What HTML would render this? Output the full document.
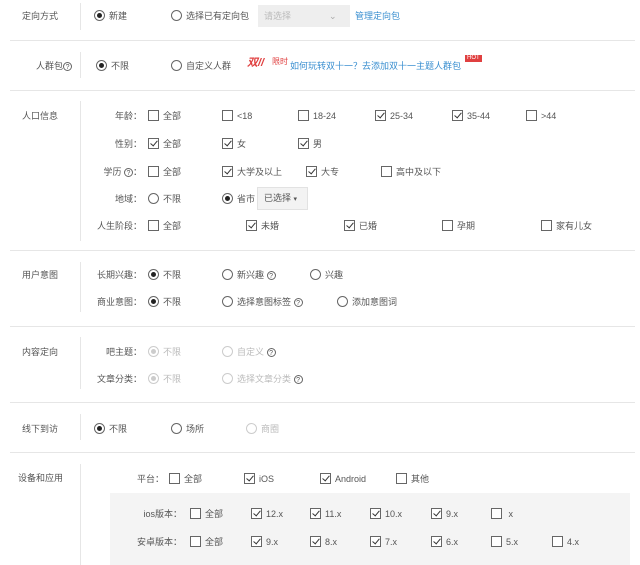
<!DOCTYPE html>
<html><head><meta charset="utf-8"><style>
body{margin:0;width:640px;height:565px;background:#fff;position:relative;overflow:hidden;font-family:"Liberation Sans","Noto Sans CJK SC",sans-serif;font-size:9px;color:#555}
.a{position:absolute;white-space:nowrap;line-height:12px}
.hl{position:absolute;left:10px;width:625px;height:1px;background:#e6e6e6}
.vl{position:absolute;left:80px;width:1px;background:#e6e6e6}
.cb,.rd{display:inline-block;border:1px solid #666;vertical-align:-2px;margin-right:4px;position:relative;box-sizing:border-box;background:#fff}
.cb{width:11px;height:11px}
.rd{border-radius:50%;width:11px;height:11px}
.rd.on:after{content:"";position:absolute;left:2px;top:2px;width:5px;height:5px;border-radius:50%;background:#222}
.cb.on:after{content:"";position:absolute;left:3px;top:0px;width:3px;height:6px;border:solid #333;border-width:0 1.2px 1.2px 0;transform:rotate(40deg)}
.dis{color:#bbb}.dis .rd{border-color:#ccc}.dis .rd.on:after{background:#ccc}
.r{text-align:right}
.q{display:inline-block;width:9px;height:9px;border:1px solid #666;border-radius:50%;font-size:7px;line-height:9px;text-align:center;vertical-align:0px;box-sizing:border-box}
</style></head><body>
<div class="vl" style="top:3px;height:27px"></div>
<div class="a" style="left:22px;top:10px">定向方式</div>
<div class="a" style="left:94px;top:10px"><span class="rd on"></span>新建</div>
<div class="a" style="left:171px;top:10px"><span class="rd"></span>选择已有定向包</div>
<div class="a" style="left:258px;top:5px;width:92px;height:22px;background:#eee"></div>
<div class="a" style="left:264px;top:10px;color:#bbb">请选择</div>
<div class="a" style="left:329px;top:10px;color:#aaa">⌄</div>
<div class="a" style="left:355px;top:10px;color:#3a8fd0">管理定向包</div>
<div class="hl" style="top:40px"></div>

<div class="vl" style="top:52px;height:26px"></div>
<div class="a" style="left:36px;top:60px">人群包<span class="q">?</span></div>
<div class="a" style="left:96px;top:60px"><span class="rd on"></span>不限</div>
<div class="a" style="left:171px;top:60px"><span class="rd"></span>自定义人群</div>
<div class="a" style="left:247px;top:57px;color:#e04040;font-weight:bold;font-style:italic;font-size:11px">双//</div>
<div class="a" style="left:272px;top:56px;color:#e04040;font-size:8px">限时</div>
<div class="a" style="left:290px;top:60px;color:#3a8fd0">如何玩转双十一？去添加双十一主题人群包</div>
<div class="a" style="left:465px;top:55px;background:#e04040;color:#fff;font-size:6px;line-height:7px;padding:0 2px">HOT</div>
<div class="hl" style="top:90px"></div>

<div class="vl" style="top:101px;height:140px"></div>
<div class="a" style="left:22px;top:110px">人口信息</div>
<div class="a r" style="left:80px;width:62px;top:110px">年龄：</div>
<div class="a" style="left:148px;top:110px"><span class="cb"></span>全部</div>
<div class="a" style="left:222px;top:110px"><span class="cb"></span>&lt;18</div>
<div class="a" style="left:298px;top:110px"><span class="cb"></span>18-24</div>
<div class="a" style="left:375px;top:110px"><span class="cb on"></span>25-34</div>
<div class="a" style="left:452px;top:110px"><span class="cb on"></span>35-44</div>
<div class="a" style="left:526px;top:110px"><span class="cb"></span>&gt;44</div>

<div class="a r" style="left:80px;width:62px;top:138px">性别：</div>
<div class="a" style="left:148px;top:138px"><span class="cb on"></span>全部</div>
<div class="a" style="left:222px;top:138px"><span class="cb on"></span>女</div>
<div class="a" style="left:298px;top:138px"><span class="cb on"></span>男</div>

<div class="a r" style="left:80px;width:62px;top:166px">学历 <span class="q">?</span>：</div>
<div class="a" style="left:148px;top:166px"><span class="cb"></span>全部</div>
<div class="a" style="left:222px;top:166px"><span class="cb on"></span>大学及以上</div>
<div class="a" style="left:306px;top:166px"><span class="cb on"></span>大专</div>
<div class="a" style="left:381px;top:166px"><span class="cb"></span>高中及以下</div>

<div class="a r" style="left:80px;width:62px;top:193px">地域：</div>
<div class="a" style="left:148px;top:193px"><span class="rd"></span>不限</div>
<div class="a" style="left:222px;top:193px"><span class="rd on"></span>省市</div>
<div class="a" style="left:257px;top:187px;width:51px;height:23px;background:#f3f3f3;border:1px solid #e2e2e2;box-sizing:border-box"></div>
<div class="a" style="left:264px;top:192px">已选择 <span style="font-size:7px">▾</span></div>

<div class="a r" style="left:80px;width:62px;top:220px">人生阶段：</div>
<div class="a" style="left:148px;top:220px"><span class="cb"></span>全部</div>
<div class="a" style="left:246px;top:220px"><span class="cb on"></span>未婚</div>
<div class="a" style="left:344px;top:220px"><span class="cb on"></span>已婚</div>
<div class="a" style="left:442px;top:220px"><span class="cb"></span>孕期</div>
<div class="a" style="left:541px;top:220px"><span class="cb"></span>家有儿女</div>
<div class="hl" style="top:250px"></div>

<div class="vl" style="top:262px;height:50px"></div>
<div class="a" style="left:22px;top:269px">用户意图</div>
<div class="a r" style="left:80px;width:62px;top:269px">长期兴趣：</div>
<div class="a" style="left:148px;top:269px"><span class="rd on"></span>不限</div>
<div class="a" style="left:222px;top:269px"><span class="rd"></span>新兴趣 <span class="q">?</span></div>
<div class="a" style="left:310px;top:269px"><span class="rd"></span>兴趣</div>
<div class="a r" style="left:80px;width:62px;top:296px">商业意图：</div>
<div class="a" style="left:148px;top:296px"><span class="rd on"></span>不限</div>
<div class="a" style="left:222px;top:296px"><span class="rd"></span>选择意图标签 <span class="q">?</span></div>
<div class="a" style="left:337px;top:296px"><span class="rd"></span>添加意图词</div>
<div class="hl" style="top:326px"></div>

<div class="vl" style="top:337px;height:52px"></div>
<div class="a" style="left:22px;top:346px">内容定向</div>
<div class="a r" style="left:80px;width:62px;top:346px">吧主题：</div>
<div class="a dis" style="left:148px;top:346px"><span class="rd on"></span>不限</div>
<div class="a dis" style="left:222px;top:346px"><span class="rd"></span>自定义 <span class="q" style="color:#555">?</span></div>
<div class="a r" style="left:80px;width:62px;top:373px">文章分类：</div>
<div class="a dis" style="left:148px;top:373px"><span class="rd on"></span>不限</div>
<div class="a dis" style="left:222px;top:373px"><span class="rd"></span>选择文章分类 <span class="q" style="color:#555">?</span></div>
<div class="hl" style="top:402px"></div>

<div class="vl" style="top:414px;height:26px"></div>
<div class="a" style="left:22px;top:423px">线下到访</div>
<div class="a" style="left:94px;top:423px"><span class="rd on"></span>不限</div>
<div class="a" style="left:171px;top:423px"><span class="rd"></span>场所</div>
<div class="a dis" style="left:246px;top:423px"><span class="rd"></span>商圈</div>
<div class="hl" style="top:452px"></div>

<div class="vl" style="top:464px;height:101px"></div>
<div class="a" style="left:18px;top:472px">设备和应用</div>
<div class="a r" style="left:100px;width:64px;top:473px">平台：</div>
<div class="a" style="left:169px;top:473px"><span class="cb"></span>全部</div>
<div class="a" style="left:244px;top:473px"><span class="cb on"></span>iOS</div>
<div class="a" style="left:320px;top:473px"><span class="cb on"></span>Android</div>
<div class="a" style="left:396px;top:473px"><span class="cb"></span>其他</div>
<div class="a" style="left:110px;top:493px;width:520px;height:72px;background:#f4f4f4"></div>
<div class="a r" style="left:110px;width:72px;top:508px">ios版本：</div>
<div class="a" style="left:190px;top:508px"><span class="cb"></span>全部</div>
<div class="a" style="left:251px;top:508px"><span class="cb on"></span>12.x</div>
<div class="a" style="left:310px;top:508px"><span class="cb on"></span>11.x</div>
<div class="a" style="left:370px;top:508px"><span class="cb on"></span>10.x</div>
<div class="a" style="left:431px;top:508px"><span class="cb on"></span>9.x</div>
<div class="a" style="left:491px;top:508px"><span class="cb"></span> x</div>
<div class="a r" style="left:110px;width:72px;top:536px">安卓版本：</div>
<div class="a" style="left:190px;top:536px"><span class="cb"></span>全部</div>
<div class="a" style="left:251px;top:536px"><span class="cb on"></span>9.x</div>
<div class="a" style="left:310px;top:536px"><span class="cb on"></span>8.x</div>
<div class="a" style="left:370px;top:536px"><span class="cb on"></span>7.x</div>
<div class="a" style="left:431px;top:536px"><span class="cb on"></span>6.x</div>
<div class="a" style="left:491px;top:536px"><span class="cb"></span>5.x</div>
<div class="a" style="left:552px;top:536px"><span class="cb"></span>4.x</div>
</body></html>
